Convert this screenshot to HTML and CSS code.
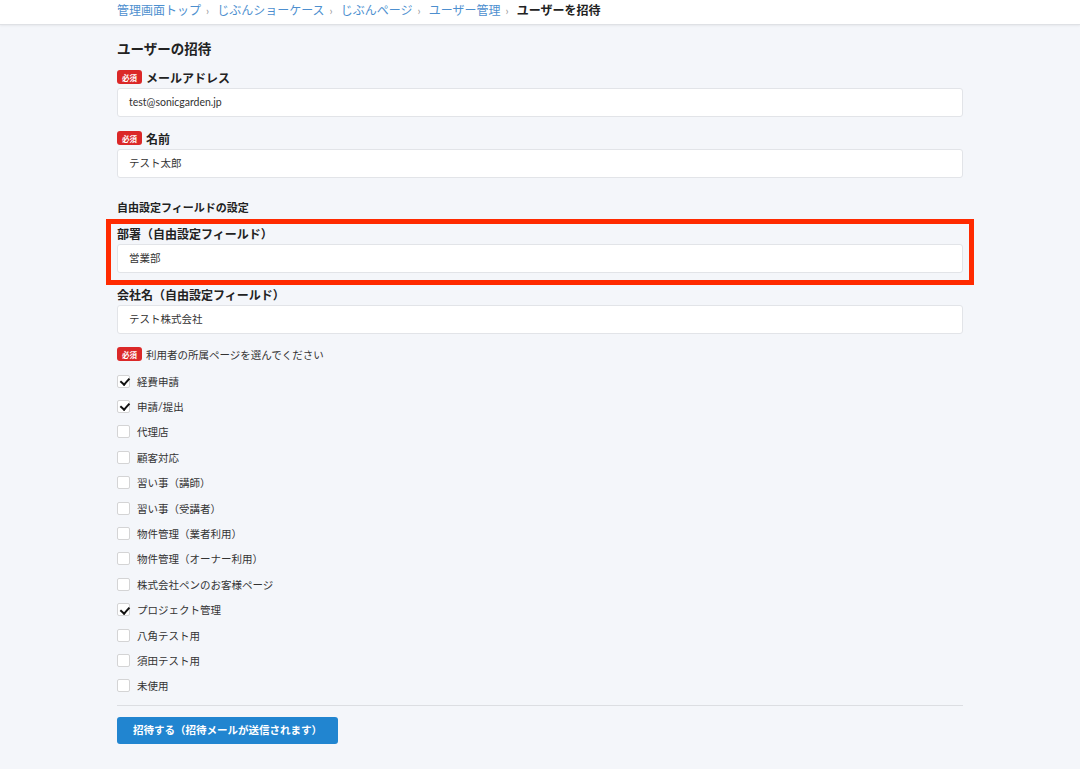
FILE: index.html
```html
<!DOCTYPE html>
<html lang="ja">
<head>
<meta charset="utf-8">
<title>ユーザーを招待</title>
<link rel="stylesheet" href="styles.css">
</head>
<body>
<header class="topbar">
  <nav class="crumbs">
    <a class="crumb">管理画面トップ</a><span class="sep">›</span>
    <a class="crumb">じぶんショーケース</a><span class="sep">›</span>
    <a class="crumb">じぶんページ</a><span class="sep">›</span>
    <a class="crumb">ユーザー管理</a><span class="sep">›</span>
    <span class="crumb current">ユーザーを招待</span>
  </nav>
</header>
<main class="page">
  <h1 class="title">ユーザーの招待</h1>

  <div class="field">
    <label class="label"><span class="badge">必須</span>メールアドレス</label>
    <div class="input">test@sonicgarden.jp</div>
  </div>

  <div class="field">
    <label class="label"><span class="badge">必須</span>名前</label>
    <div class="input">テスト太郎</div>
  </div>

  <h2 class="section">自由設定フィールドの設定</h2>

  <div class="field field-first highlight">
    <label class="label">部署（自由設定フィールド）</label>
    <div class="input">営業部</div>
  </div>

  <div class="field">
    <label class="label">会社名（自由設定フィールド）</label>
    <div class="input">テスト株式会社</div>
  </div>

  <div class="pages-head"><span class="badge">必須</span>利用者の所属ページを選んでください</div>

  <ul class="checks">
    <li class="check on"><span class="box"></span>経費申請</li>
    <li class="check on"><span class="box"></span>申請/提出</li>
    <li class="check"><span class="box"></span>代理店</li>
    <li class="check"><span class="box"></span>顧客対応</li>
    <li class="check"><span class="box"></span>習い事（講師）</li>
    <li class="check"><span class="box"></span>習い事（受講者）</li>
    <li class="check"><span class="box"></span>物件管理（業者利用）</li>
    <li class="check"><span class="box"></span>物件管理（オーナー利用）</li>
    <li class="check"><span class="box"></span>株式会社ペンのお客様ページ</li>
    <li class="check on"><span class="box"></span>プロジェクト管理</li>
    <li class="check"><span class="box"></span>八角テスト用</li>
    <li class="check"><span class="box"></span>須田テスト用</li>
    <li class="check"><span class="box"></span>未使用</li>
  </ul>

  <hr class="divider">

  <button class="btn">招待する（招待メールが送信されます）</button>
</main>
</body>
</html>
```

FILE: styles.css
```css
* { box-sizing: border-box; }
html, body {
  margin: 0;
  padding: 0;
}
body {
  background: #f4f6fa;
  font-family: Lato, "Noto Sans CJK JP", sans-serif;
  color: #333333;
  height: 769px;
  overflow: hidden;
}
.topbar {
  height: 25px;
  background: #ffffff;
  border-bottom: 1px solid #dfe1e5;
  box-shadow: 0 1px 2px rgba(0,0,0,0.06);
  padding-left: 117px;
}
.crumbs {
  font-size: 12px;
  line-height: 21px;
  white-space: nowrap;
}
.crumb {
  color: #4d8fcf;
  text-decoration: none;
}
.crumb.current {
  color: #222;
  font-weight: 700;
}
.sep {
  color: #9a9a9a;
  margin: 0 5px;
  font-size: 11px;
}
.page {
  width: 846px;
  margin-left: 117px;
}
.title {
  margin: 14px 0 0;
  font-size: 13.5px;
  line-height: 20px;
  font-weight: 700;
  color: #222;
}
.field {
  margin-top: 12px;
}
.title + .field { margin-top: 9px; }
.field-first { margin-top: 7px; }
.label {
  display: flex;
  align-items: center;
  height: 18px;
  font-size: 12px;
  font-weight: 700;
  color: #222;
  margin-bottom: 2px;
}
.badge {
  display: inline-flex;
  align-items: center;
  justify-content: center;
  height: 14px;
  padding: 0 5px;
  margin-right: 4px;
  background: #db2828;
  color: #fff;
  font-size: 7.5px;
  font-weight: 700;
  border-radius: 3px;
}
.input {
  height: 29px;
  background: #fff;
  border: 1px solid #e2e4e8;
  border-radius: 3px;
  padding-left: 11px;
  font-size: 10.5px;
  line-height: 27px;
  color: #333;
}
.section {
  margin: 21px 0 0;
  font-size: 11px;
  line-height: 18px;
  font-weight: 700;
  color: #222;
}
.highlight {
  position: relative;
}
.highlight::after {
  content: "";
  position: absolute;
  left: -11px;
  right: -11px;
  top: -5px;
  bottom: -12px;
  border: 5px solid #ff2a00;
  pointer-events: none;
}
.pages-head {
  display: flex;
  align-items: center;
  height: 18px;
  margin-top: 11px;
  font-size: 10.5px;
  color: #333;
}
.checks {
  list-style: none;
  margin: 9px 0 0;
  padding: 0;
}
.check {
  display: flex;
  align-items: center;
  height: 18px;
  margin-bottom: 7.42px;
  font-size: 10.5px;
  color: #333;
}
.check:last-child { margin-bottom: 0; }
.box {
  position: relative;
  width: 13px;
  height: 13px;
  background: #fff;
  border: 1px solid #d4d4d5;
  border-radius: 2px;
  margin-right: 7px;
  flex: none;
}
.check.on .box::after {
  content: "";
  position: absolute;
  left: 3.5px;
  top: 0.5px;
  width: 3.5px;
  height: 7px;
  border-right: 2.2px solid #111;
  border-bottom: 2.2px solid #111;
  transform: rotate(42deg);
}
.divider {
  margin: 10px 0 0;
  border: 0;
  border-top: 1px solid #dcdee2;
  height: 0;
}
.btn {
  display: block;
  margin-top: 11px;
  height: 27px;
  padding: 0 16px;
  background: #2185d0;
  color: #fff;
  border: 0;
  border-radius: 3px;
  font-family: Lato, "Noto Sans CJK JP", sans-serif;
  font-size: 10.5px;
  font-weight: 700;
  line-height: 27px;
}
```
